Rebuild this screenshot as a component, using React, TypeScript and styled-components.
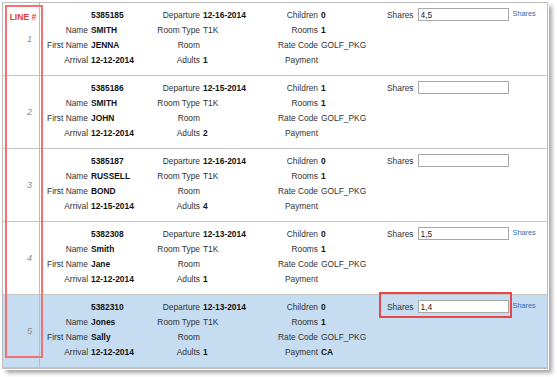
import styled, { createGlobalStyle } from 'styled-components';

const GlobalStyle = createGlobalStyle`
  html, body {
    margin: 0;
    padding: 0;
    background: #ffffff;
  }
  body {
    font-family: 'Liberation Sans', Arial, sans-serif;
    color: #333333;
  }
`;

const Page = styled.div`
  padding: 2px 0 0 2px;
  width: 557px;
  height: 377px;
  box-sizing: border-box;
`;

const Table = styled.div`
  position: relative;
  width: 546px;
  border: 1px solid #bdbdbd;
  box-sizing: border-box;
  background: #ffffff;
  box-shadow: 0 0 0 1px #ffffff, 4px 4px 4px 0 rgba(0, 0, 0, 0.35);
`;

const Row = styled.div<{ $selected?: boolean }>`
  display: grid;
  grid-template-columns: 37px 1fr;
  height: 73px;
  box-sizing: border-box;
  border-bottom: 1px solid #c4c4c4;
  background: ${(p) => (p.$selected ? '#c6dcf0' : '#ffffff')};

  &:last-child {
    border-bottom: none;
    height: 73px;
  }
`;

const LineCell = styled.div`
  display: flex;
  align-items: center;
  justify-content: flex-end;
  padding-right: 7px;
  border-right: 1px solid #bdbdbd;
  font-size: 9px;
  font-style: italic;
  color: #8a8a8a;
`;

const Details = styled.div`
  display: grid;
  grid-template-columns: 48px 62px 50px 68px 50px 69px 1fr;
  grid-auto-rows: 15px;
  align-items: center;
  padding-top: 4px;
  font-size: 8.4px;
`;

const Label = styled.span`
  text-align: right;
  color: #333333;
  white-space: nowrap;
`;

const Value = styled.span<{ $plain?: boolean }>`
  padding-left: 3px;
  font-weight: ${(p) => (p.$plain ? 400 : 700)};
  color: ${(p) => (p.$plain ? '#333333' : '#111111')};
  white-space: nowrap;
`;

const ShareGroup = styled.div`
  display: flex;
  align-items: center;
  gap: 4px;
`;

const ShareField = styled.label<{ $flag?: boolean }>`
  position: relative;
  display: flex;
  align-items: center;
  gap: 4px;
  height: 15px;

  &::after {
    content: '';
    display: ${(p) => (p.$flag ? 'block' : 'none')};
    position: absolute;
    top: -7px;
    left: -8px;
    right: -3px;
    bottom: -4px;
    border: 2px solid #e8474a;
    pointer-events: none;
  }
`;

const ShareInput = styled.input`
  width: 91px;
  height: 13px;
  box-sizing: border-box;
  margin: 0;
  padding: 0 2px;
  border: 1px solid #a8a8a8;
  background: #ffffff;
  font-family: 'Liberation Sans', Arial, sans-serif;
  font-size: 8.4px;
  color: #222222;
  outline: none;
`;

const ShareLink = styled.a`
  font-size: 7.3px;
  color: #2a6db5;
  text-decoration: none;
  margin-top: -3px;
`;

const LineBox = styled.div`
  position: absolute;
  left: 2px;
  top: 2px;
  width: 38px;
  height: 353px;
  box-sizing: border-box;
  border: 2px solid #f27272;
  display: flex;
  justify-content: center;
  padding-top: 5px;
  pointer-events: none;
`;

const LineTitle = styled.span`
  font-size: 8.6px;
  font-weight: 700;
  color: #e53b3b;
  height: 10px;
  line-height: 10px;
  padding-right: 2px;
`;

interface Booking {
  line: number;
  id: string;
  departure: string;
  children: string;
  name: string;
  roomType: string;
  rooms: string;
  firstName: string;
  rateCode: string;
  arrival: string;
  adults: string;
  payment: string;
  shares: string;
  link: boolean;
  selected?: boolean;
}

const bookings: Booking[] = [
  { line: 1, id: '5385185', departure: '12-16-2014', children: '0', name: 'SMITH', roomType: 'T1K', rooms: '1', firstName: 'JENNA', rateCode: 'GOLF_PKG', arrival: '12-12-2014', adults: '1', payment: '', shares: '4,5', link: true },
  { line: 2, id: '5385186', departure: '12-15-2014', children: '1', name: 'SMITH', roomType: 'T1K', rooms: '1', firstName: 'JOHN', rateCode: 'GOLF_PKG', arrival: '12-12-2014', adults: '2', payment: '', shares: '', link: false },
  { line: 3, id: '5385187', departure: '12-16-2014', children: '0', name: 'RUSSELL', roomType: 'T1K', rooms: '1', firstName: 'BOND', rateCode: 'GOLF_PKG', arrival: '12-15-2014', adults: '4', payment: '', shares: '', link: false },
  { line: 4, id: '5382308', departure: '12-13-2014', children: '0', name: 'Smith', roomType: 'T1K', rooms: '1', firstName: 'Jane', rateCode: 'GOLF_PKG', arrival: '12-12-2014', adults: '1', payment: '', shares: '1,5', link: true },
  { line: 5, id: '5382310', departure: '12-13-2014', children: '0', name: 'Jones', roomType: 'T1K', rooms: '1', firstName: 'Sally', rateCode: 'GOLF_PKG', arrival: '12-12-2014', adults: '1', payment: 'CA', shares: '1,4', link: true, selected: true },
];

const BookingRow = ({ b }: { b: Booking }) => (
  <Row $selected={b.selected}>
    <LineCell>{b.line}</LineCell>
    <Details>
      <Label />
      <Value>{b.id}</Value>
      <Label>Departure</Label>
      <Value>{b.departure}</Value>
      <Label>Children</Label>
      <Value>{b.children}</Value>
      <ShareGroup>
        <ShareField $flag={b.selected}>
          Shares
          <ShareInput defaultValue={b.shares} />
        </ShareField>
        {b.link && <ShareLink href='#'>Shares</ShareLink>}
      </ShareGroup>

      <Label>Name</Label>
      <Value>{b.name}</Value>
      <Label>Room Type</Label>
      <Value $plain>{b.roomType}</Value>
      <Label>Rooms</Label>
      <Value>{b.rooms}</Value>
      <span />

      <Label>First Name</Label>
      <Value>{b.firstName}</Value>
      <Label>Room</Label>
      <Value />
      <Label>Rate Code</Label>
      <Value $plain>{b.rateCode}</Value>
      <span />

      <Label>Arrival</Label>
      <Value>{b.arrival}</Value>
      <Label>Adults</Label>
      <Value>{b.adults}</Value>
      <Label>Payment</Label>
      <Value>{b.payment}</Value>
      <span />
    </Details>
  </Row>
);

const App = (): JSX.Element => (
  <Page>
    <GlobalStyle />
    <Table>
      {bookings.map((b) => (
        <BookingRow key={b.id} b={b} />
      ))}
      <LineBox>
        <LineTitle>LINE #</LineTitle>
      </LineBox>
    </Table>
  </Page>
);

export default App;
